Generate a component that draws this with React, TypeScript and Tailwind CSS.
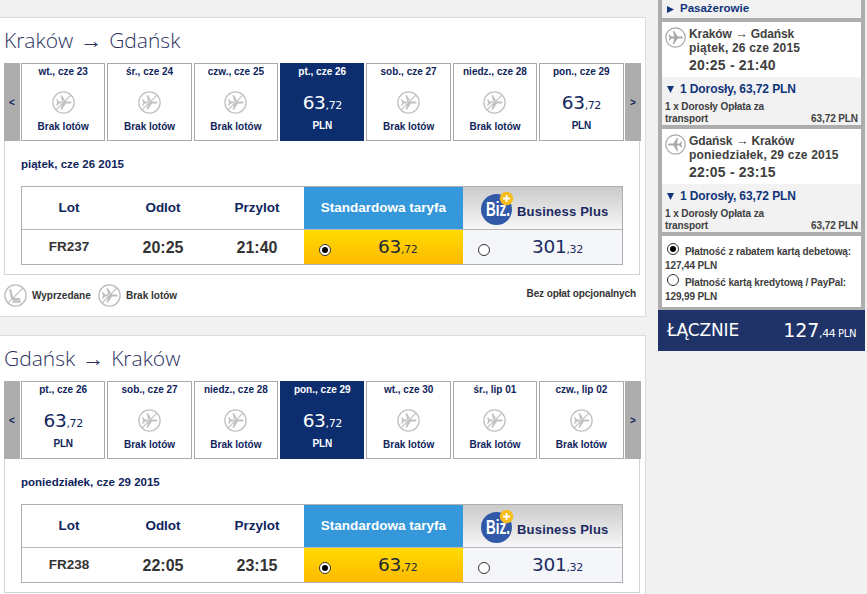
import React from "react";

const SANS = "font-['Liberation_Sans',Arial,sans-serif]";
const VERD = "font-['DejaVu_Sans',Verdana,sans-serif]";

function Plane({ className = "", kind = "cancelled" }: { className?: string; kind?: "cancelled" | "right" | "left" }) {
  return (
    <svg viewBox="0 0 24 24" className={className} fill="none" aria-hidden="true">
      <circle cx="12" cy="12" r="11.100" stroke="currentColor" strokeWidth="1.400" />
      <path
        transform={kind === "left" ? "rotate(180 12 12)" : undefined}
        fill="currentColor"
        d="M20.500 12c0-.8-1-1.100-1.900-1.100h-4.100L10.300 4.500H8.900l1.700 6.400H7.300L5.500 8.700H4.300l1 3.300-1 3.300h1.200l1.800-2.200h3.300l-1.700 6.400h1.400l4.200-6.400h4.100c.9 0 1.900-.3 1.900-1.100z"
      />
      {kind === "cancelled" && (
        <>
          <path d="M4.300 18.500L18.500 4.300" stroke="#fff" strokeWidth="0.900" />
          <path d="M4.300 19.700L19.700 4.300" stroke="currentColor" strokeWidth="1.300" />
        </>
      )}
    </svg>
  );
}

function Seat() {
  return (
    <svg viewBox="0 0 24 24" className="h-[23px] w-[23px] text-[#bcbcbc]" fill="none" aria-hidden="true">
      <circle cx="12" cy="12" r="11.100" stroke="currentColor" strokeWidth="1.400" />
      <path d="M6.300 5.500l2 8.500c.3 1.100 1 1.600 2.100 1.600h6.100" stroke="currentColor" strokeWidth="2.200" />
      <path d="M9 18.300h8.500" stroke="currentColor" strokeWidth="2.400" />
      <path d="M4.300 19.700L19.700 4.300" stroke="currentColor" strokeWidth="1.300" />
    </svg>
  );
}

function Price({ whole, cents, className = "" }: { whole: string; cents: string; className?: string }) {
  return (
    <span className={`${VERD} whitespace-nowrap leading-none ${className}`}>
      <span className="text-[18.5px] tracking-[-0.3px]">{whole}</span>
      <span className="text-[11px] tracking-[-0.4px]">,{cents}</span>
    </span>
  );
}

function Radio({ checked = false }: { checked?: boolean }) {
  return (
    <span className="inline-flex h-3 w-3 shrink-0 items-center justify-center rounded-full border border-[#333] bg-white">
      {checked && <span className="h-1.5 w-1.5 rounded-full bg-black" />}
    </span>
  );
}

type Day = { label: string; price?: boolean; selected?: boolean };

function DayTile({ label, price, selected }: Day) {
  return (
    <div
      className={`flex h-[78px] flex-1 flex-col items-center border text-[10px] font-bold leading-[12px] ${
        selected ? "border-[#0c2e6e] bg-[#0c2e6e] text-white" : "border-[#a9a9a9] bg-white text-[#10245c]"
      }`}
    >
      <div className="mt-[2px] whitespace-nowrap">{label}</div>
      {price ? (
        <>
          <Price whole="63" cents="72" className="mt-[16px] font-normal" />
          <div className="mt-[7px] tracking-[-0.2px]">PLN</div>
        </>
      ) : (
        <>
          <Plane className="mt-[13px] h-[23px] w-[23px] text-[#c2c2c2]" />
          <div className="mt-[7px]">Brak lotów</div>
        </>
      )}
    </div>
  );
}

function Business() {
  return (
    <div className="flex items-center pl-[18px]">
      <svg viewBox="0 0 33 34" className="h-[34px] w-[33px] shrink-0 overflow-visible" aria-hidden="true">
        <circle cx="15.500" cy="18.500" r="15.500" fill="#3159a8" />
        <text x="5" y="25" fill="#fff" fontSize="20" fontWeight="700" textLength="24" lengthAdjust="spacingAndGlyphs" className="font-['Liberation_Sans',sans-serif]">
          Biz.
        </text>
        <circle cx="25.500" cy="7.500" r="6.700" fill="#f6be1c" />
        <path d="M22 7.500h7M25.500 4v7" stroke="#fff" strokeWidth="1.800" />
      </svg>
      <span className="mt-[8px] ml-[3px] whitespace-nowrap text-[13px] font-bold tracking-[0.2px] text-[#1b2a60]">Business Plus</span>
    </div>
  );
}

type TripProps = { from: string; to: string; days: Day[]; date: string; flight: string; dep: string; arr: string };

function Trip({ from, to, days, date, flight, dep, arr }: TripProps) {
  return (
    <>
      <h2 className="flex h-[45px] items-center pt-px pl-[4px] font-['Open_Sans',sans-serif] text-[21px] font-light whitespace-nowrap text-[#2b3260]">
        <span>{from}</span>
        <span className="mx-[7px] w-[22px] text-center font-['Liberation_Sans',sans-serif] text-[22px] font-normal leading-none">→</span>
        <span>{to}</span>
      </h2>
      <div className="ml-[4px] h-[213px] w-[637px]">
        <div className="flex h-[78px]">
          <div className="flex w-[16px] items-center justify-center bg-[#adadad] text-[10px] font-bold text-[#10245c]">&lt;</div>
          <div className="flex flex-1 gap-[2px] pr-[1.5px] pl-[1px]">
            {days.map((d) => (
              <DayTile key={d.label} {...d} />
            ))}
          </div>
          <div className="flex w-[16px] items-center justify-center bg-[#adadad] text-[10px] font-bold text-[#10245c]">&gt;</div>
        </div>
        <div className="h-[134px] w-[636px] border-x border-b border-[#d3d3d3] pl-[16px]">
          <div className="h-[45px] pt-[16px] text-[11.5px] font-bold leading-[14px] text-[#10245c]">{date}</div>
          <div className="grid h-[79px] w-[602px] grid-cols-[94px_94px_94px_159px_159px] grid-rows-[43px_34px] border border-[#b0b0b0] text-center text-[13.5px] font-bold text-[#10245c]">
            <div className="flex items-center justify-center border-b border-[#b8b8b8] pt-px">Lot</div>
            <div className="flex items-center justify-center border-b border-[#b8b8b8] pt-px">Odlot</div>
            <div className="flex items-center justify-center border-b border-[#b8b8b8] pt-px">Przylot</div>
            <div className="flex items-center justify-center border-b border-[#b8b8b8] bg-[#3498db] pt-px text-white">Standardowa taryfa</div>
            <div className="border-b border-[#b8b8b8] bg-gradient-to-b from-[#cbcbcb] to-[#f7f7f7] pt-[4px]">
              <Business />
            </div>
            <div className="flex items-center justify-center pt-px text-[#333]">{flight}</div>
            <div className="flex items-center justify-center pt-px text-[16px] text-[#333]">{dep}</div>
            <div className="flex items-center justify-center pt-px text-[16px] text-[#333]">{arr}</div>
            <div className="flex items-center bg-gradient-to-b from-[#ffdb00] to-[#ffb900] pl-[15px] font-normal text-[#1c2a35]">
              <div className="flex pt-[5px]"><Radio checked /></div>
              <Price whole="63" cents="72" className="ml-[47px] pt-px" />
            </div>
            <div className="flex items-center bg-[#f4f6f9] pl-[15px] font-normal text-[#1b2a60]">
              <div className="flex pt-[5px]"><Radio /></div>
              <Price whole="301" cents="32" className="ml-[42px] pt-px" />
            </div>
          </div>
        </div>
      </div>
    </>
  );
}

type LegProps = { from: string; to: string; date: string; hours: string; kind: "left" | "right" };

function Leg({ from, to, date, hours, kind }: LegProps) {
  return (
    <div className="mb-[4px] h-[103px] bg-[#f2f2f2]">
      <div className="flex h-[55px] bg-white pt-[5px] pl-[3px]">
        <Plane kind={kind} className="h-[21px] w-[21px] shrink-0 text-[#a8a8a8]" />
        <div className="ml-[3px] whitespace-nowrap text-[12px] font-bold leading-[14px] tracking-[0.2px] text-[#404040]">
          <div className="flex tracking-[-0.1px]">
            <span>{from}</span>
            <span className="w-[19px] text-center text-[13px] font-normal">→</span>
            <span>{to}</span>
          </div>
          <div>{date}</div>
          <div className="pt-[2px] text-[14px] leading-[17px]">{hours}</div>
        </div>
      </div>
      <div className="flex h-[24px] items-center pl-[5px] text-[#10347a]">
        <svg viewBox="0 0 8 8" className="mr-[6px] h-[7px] w-[7px]"><path d="M0 0h8L4 8z" fill="currentColor" /></svg>
        <span className="text-[12px] font-bold tracking-[-0.1px] whitespace-nowrap">1 Dorosły, 63,72 PLN</span>
      </div>
      <div className="px-[3px] text-[10px] font-bold leading-[12px] tracking-[-0.1px] text-[#404040]">
        <div>1 x Dorosły Opłata za</div>
        <div className="flex justify-between"><span>transport</span><span>63,72 PLN</span></div>
      </div>
    </div>
  );
}

const outbound: Day[] = [
  { label: "wt., cze 23" },
  { label: "śr., cze 24" },
  { label: "czw., cze 25" },
  { label: "pt., cze 26", price: true, selected: true },
  { label: "sob., cze 27" },
  { label: "niedz., cze 28" },
  { label: "pon., cze 29", price: true },
];

const inbound: Day[] = [
  { label: "pt., cze 26", price: true },
  { label: "sob., cze 27" },
  { label: "niedz., cze 28" },
  { label: "pon., cze 29", price: true, selected: true },
  { label: "wt., cze 30" },
  { label: "śr., lip 01" },
  { label: "czw., lip 02" },
];

export default function App() {
  return (
    <div className={`flex h-[594px] w-[867px] overflow-hidden bg-[#f1f1f1] ${SANS}`}>
      <main className="w-[646px] shrink-0 pt-[17px]">
        <section className="h-[300px] border-y border-r border-[#dcdcdc] bg-white">
          <Trip from="Kraków" to="Gdańsk" days={outbound} date="piątek, cze 26 2015" flight="FR237" dep="20:25" arr="21:40" />
          <div className="flex h-[38px] items-center pl-[4px] text-[10px] font-bold text-[#333]">
            <Seat />
            <span className="ml-[5px] w-[66px] whitespace-nowrap">Wyprzedane</span>
            <Plane className="h-[23px] w-[23px] text-[#bcbcbc]" />
            <span className="ml-[5px]">Brak lotów</span>
            <span className="mr-[9px] mb-[3px] ml-auto tracking-[-0.1px]">Bez opłat opcjonalnych</span>
          </div>
        </section>
        <section className="mt-[18px] h-[300px] border-y border-r border-[#dcdcdc] bg-white">
          <Trip from="Gdańsk" to="Kraków" days={inbound} date="poniedziałek, cze 29 2015" flight="FR238" dep="22:05" arr="23:15" />
        </section>
      </main>
      <aside className="ml-[12px] h-[351px] w-[207px] bg-[#adadad]">
        <div className="h-[310px] px-[4px]">
          <div className="mb-[4px] flex h-[18px] items-center bg-[#f2f2f2] pl-[5px] text-[#10347a]">
            <svg viewBox="0 0 8 8" className="mr-[6px] h-[7px] w-[7px]"><path d="M0 0v8l8-4z" fill="currentColor" /></svg>
            <span className="text-[11.5px] font-bold">Pasażerowie</span>
          </div>
          <Leg from="Kraków" to="Gdańsk" date="piątek, 26 cze 2015" hours="20:25 - 21:40" kind="right" />
          <Leg from="Gdańsk" to="Kraków" date="poniedziałek, 29 cze 2015" hours="22:05 - 23:15" kind="left" />
          <div className="h-[71px] bg-white px-[3px] pt-[6px] text-[10px] font-bold leading-[15px] tracking-[-0.12px] text-[#404040]">
            <div className="flex h-[18px] whitespace-nowrap"><span className="mt-px mr-[6px] ml-[2px] flex h-3"><Radio checked /></span><span className="pt-[2px]">Płatność z rabatem kartą debetową:</span></div>
            <div className="h-[13px] leading-[12px]">127,44 PLN</div>
            <div className="flex h-[18px] whitespace-nowrap"><span className="mt-px mr-[6px] ml-[2px] flex h-3"><Radio /></span><span className="pt-[2px]">Płatność kartą kredytową / PayPal:</span></div>
            <div className="leading-[12px]">129,99 PLN</div>
          </div>
        </div>
        <div className={`flex h-[41px] items-center bg-[#1f3369] pr-[9px] pl-[9px] text-white ${VERD}`}>
          <span className="text-[17px] tracking-[-0.1px]">ŁĄCZNIE</span>
          <span className="ml-auto whitespace-nowrap text-[19px] tracking-[-0.2px]">127<span className="text-[11px] tracking-[-0.4px]">,44</span><span className="text-[10px] tracking-[-0.4px]"> PLN</span></span>
        </div>
      </aside>
    </div>
  );
}
